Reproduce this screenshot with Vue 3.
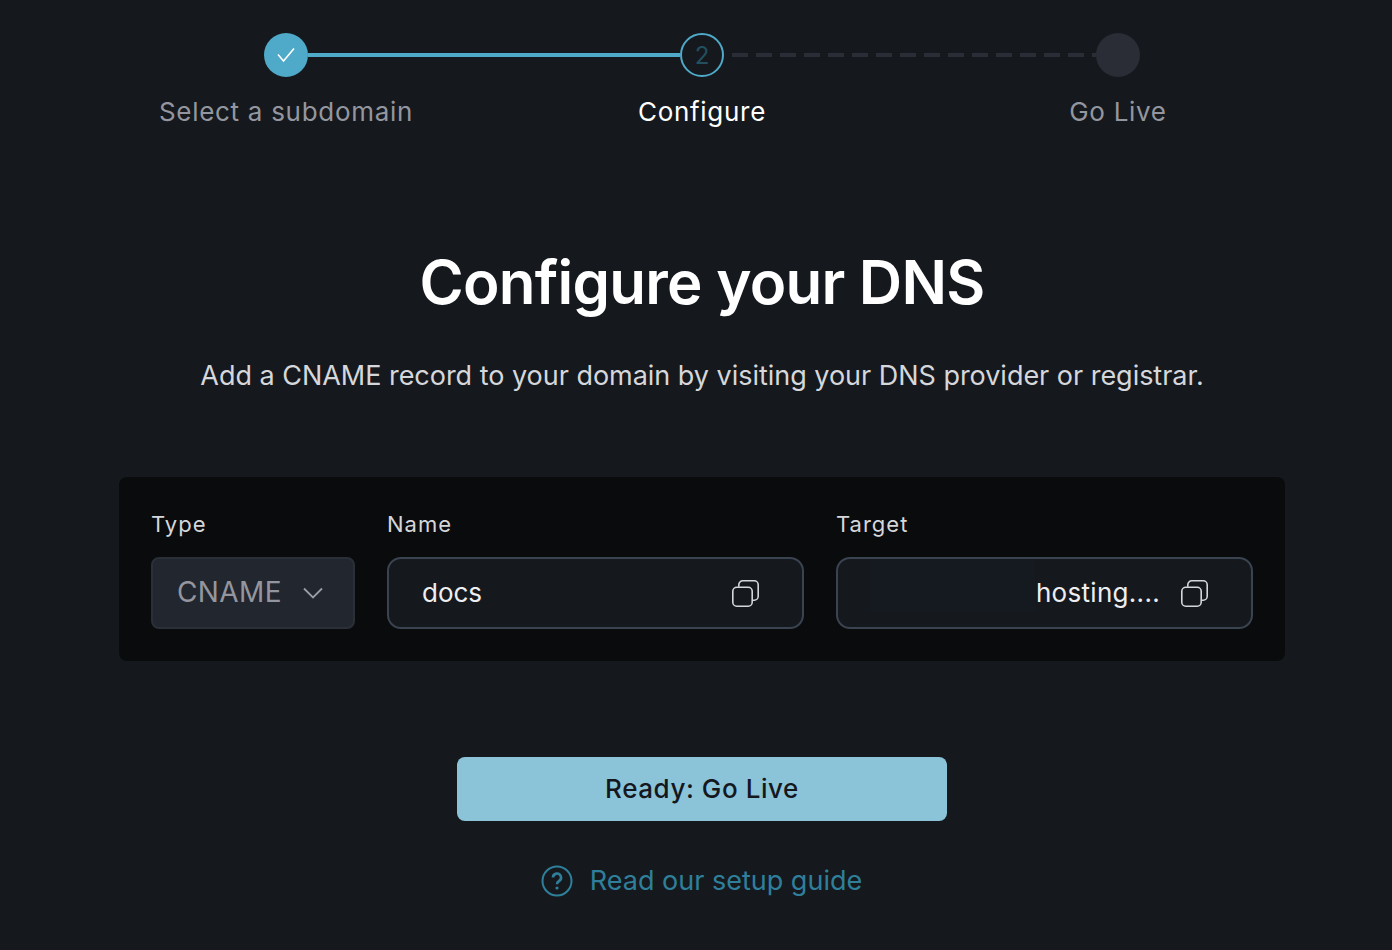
<template>
  <div class="page">
    <div class="stepper">
      <div v-for="(step, i) in steps" :key="step.label" class="step" :class="step.state">
        <div class="step-track">
          <div v-if="i > 0" class="line" :class="steps[i - 1].state === 'done' ? 'solid' : 'dashed'"></div>
          <div class="dot">
            <svg v-if="step.state === 'done'" width="18" height="18" viewBox="0 0 18 18" fill="none">
              <path d="M1 8.500 L6.500 15 L17 2.500" stroke="#fff" stroke-width="1.6" />
            </svg>
            <span v-else-if="step.state === 'active'">2</span>
          </div>
        </div>
        <div class="step-label">{{ step.label }}</div>
      </div>
    </div>

    <h1 class="title">Configure your DNS</h1>
    <p class="subtitle">Add a CNAME record to your domain by visiting your DNS provider or registrar.</p>

    <div class="record-card">
      <div class="field field-type">
        <label>Type</label>
        <div class="select">
          <span class="value">CNAME</span>
          <svg width="20" height="12" viewBox="0 0 20 12" fill="none">
            <path d="M1 1.500 L10 10.500 L19 1.500" stroke="#9a9ca6" stroke-width="1.8" />
          </svg>
        </div>
      </div>
      <div class="field">
        <label>Name</label>
        <div class="input">
          <span class="value">docs</span>
          <svg class="copy" width="27" height="27" viewBox="0 0 27 27" fill="none">
            <path d="M6.800 6.800 V4.800 A4 4 0 0 1 10.800 0.800 H22.200 A4 4 0 0 1 26.200 4.800 V16.200 A4 4 0 0 1 22.200 20.200 H20.200" stroke="#d6d7da" stroke-width="1.6" />
            <rect x="0.800" y="7.300" width="19.400" height="18.900" rx="4" stroke="#d6d7da" stroke-width="1.6" />
          </svg>
        </div>
      </div>
      <div class="field">
        <label>Target</label>
        <div class="input target">
          <span class="redacted"></span>
          <span class="value">hosting....</span>
          <svg class="copy" width="27" height="27" viewBox="0 0 27 27" fill="none">
            <path d="M6.800 6.800 V4.800 A4 4 0 0 1 10.800 0.800 H22.200 A4 4 0 0 1 26.200 4.800 V16.200 A4 4 0 0 1 22.200 20.200 H20.200" stroke="#d6d7da" stroke-width="1.6" />
            <rect x="0.800" y="7.300" width="19.400" height="18.900" rx="4" stroke="#d6d7da" stroke-width="1.6" />
          </svg>
        </div>
      </div>
    </div>

    <button class="go-live">Ready: Go Live</button>

    <a class="guide">
      <svg width="32" height="32" viewBox="0 0 32 32" fill="none">
        <circle cx="16" cy="16" r="14.500" stroke="#2f7f9b" stroke-width="2" />
        <path d="M12 12.600 A4 4 0 1 1 18 16 C16.500 16.900 16 17.500 16 19.200" stroke="#2f7f9b" stroke-width="2.600" />
        <circle cx="16" cy="23" r="1.600" fill="#2f7f9b" />
      </svg>
      <span>Read our setup guide</span>
    </a>
  </div>
</template>

<script setup>
const steps = [
  { label: 'Select a subdomain', state: 'done' },
  { label: 'Configure', state: 'active' },
  { label: 'Go Live', state: 'todo' }
]
</script>

<style>
html, body {
  margin: 0;
  background: #15191e;
}
</style>

<style scoped>
.page {
  width: 1392px;
  height: 950px;
  overflow: hidden;
  box-sizing: border-box;
  padding: 33px 0 0 12px;
  background: #15191e;
  display: flex;
  flex-direction: column;
  align-items: center;
  font-family: Inter, "Liberation Sans", sans-serif;
  color: #fff;
}

.stepper {
  display: flex;
}

.step {
  width: 416px;
  display: flex;
  flex-direction: column;
  align-items: center;
}

.step-track {
  position: relative;
  height: 44px;
}

.dot {
  width: 44px;
  height: 44px;
  box-sizing: border-box;
  border-radius: 50%;
  display: flex;
  align-items: center;
  justify-content: center;
}

.done .dot {
  background: #4fa9c8;
}

.active .dot {
  border: 2px solid #4fa9c8;
  color: #22505f;
  font-size: 24px;
}

.todo .dot {
  background: #2a2c36;
}

.line {
  position: absolute;
  top: 20px;
  right: 44px;
  height: 4px;
}

.line.solid {
  width: 372px;
  background: #4fa9c8;
}

.line.dashed {
  width: 364px;
  background: repeating-linear-gradient(to right, #2a2c36 0 16px, transparent 16px 24px);
}

.step-label {
  margin-top: 18px;
  font-size: 26px;
  line-height: 34px;
  letter-spacing: 0.7px;
  color: #94969f;
}

.active .step-label {
  color: #fff;
}

.title {
  margin: 117px 0 0;
  font-size: 60px;
  line-height: 72px;
  font-weight: 600;
  letter-spacing: -0.75px;
}

.subtitle {
  margin: 40px 0 0;
  font-size: 27px;
  line-height: 36px;
  letter-spacing: -0.025px;
  color: #d6d7da;
}

.record-card {
  margin-top: 83px;
  width: 1166px;
  height: 184px;
  box-sizing: border-box;
  padding: 32px;
  border-radius: 8px;
  background: #0a0b0d;
  display: flex;
  gap: 32px;
}

.field {
  flex: 1;
  min-width: 0;
}

.field-type {
  flex: 0 0 204px;
}

.field label {
  display: block;
  height: 30px;
  margin-bottom: 18px;
  font-size: 22px;
  line-height: 30px;
  letter-spacing: 1px;
  color: #d6d7da;
}

.select, .input {
  height: 72px;
  box-sizing: border-box;
  display: flex;
  align-items: center;
}

.value {
  padding-bottom: 2px;
}

.select {
  padding: 0 30px 0 24px;
  justify-content: space-between;
  border-radius: 8px;
  background: #22262e;
  border: 2px solid #2b2f38;
  color: #94969f;
  font-size: 28px;
  letter-spacing: 0.4px;
}

.input {
  padding: 0 43px 0 33px;
  justify-content: space-between;
  border-radius: 14px;
  border: 2px solid #3a4350;
  background: #15191e;
  color: #eeeef0;
  font-size: 26px;
  position: relative;
}

.target {
  justify-content: flex-end;
  gap: 21px;
}

.target .value {
  letter-spacing: 0.3px;
}

.redacted {
  position: absolute;
  left: 32px;
  top: 0;
  width: 165px;
  height: 52px;
  background: #151a21;
}

.go-live {
  margin-top: 96px;
  padding-bottom: 3px;
  width: 490px;
  height: 64px;
  border: none;
  border-radius: 8px;
  background: #8bc4d8;
  color: #14181e;
  font-family: inherit;
  font-size: 26px;
  font-weight: 500;
  letter-spacing: 0.57px;
}

.guide {
  margin-top: 29px;
  margin-left: -1px;
  display: flex;
  align-items: center;
  gap: 17px;
  font-size: 27px;
  line-height: 62px;
  color: #2f7f9b;
}
</style>
